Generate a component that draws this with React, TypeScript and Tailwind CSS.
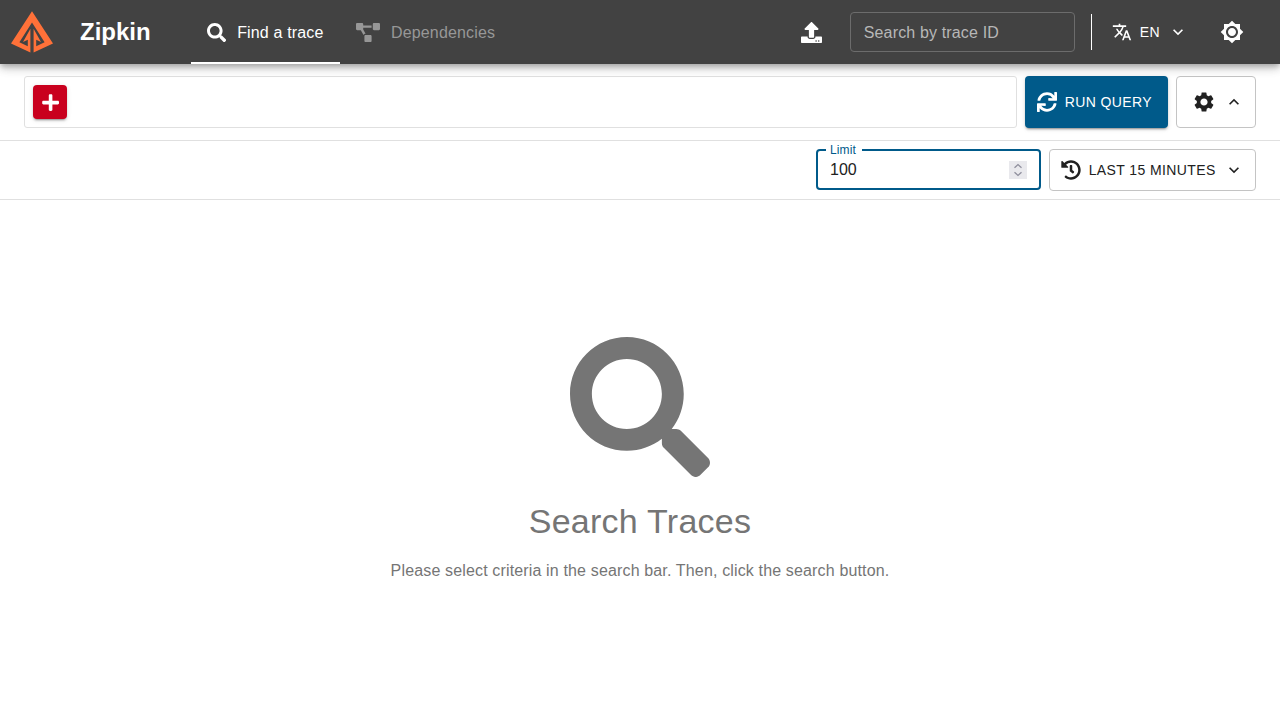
import { FaSearch, FaProjectDiagram, FaUpload, FaPlus, FaSync, FaHistory } from "react-icons/fa";
import { MdTranslate, MdSettings, MdKeyboardArrowDown, MdKeyboardArrowUp, MdBrightness7 } from "react-icons/md";

function Logo() {
  return (
    <svg width="42" height="42" viewBox="0 0 42 42" fill="#ff7139">
      <path d="M21 0.3L42 32.6L22.6 41.6V17.8L30 31L25.2 28.8V35.2L33.6 31.3L21 11.4L8.4 31.3L16.8 35.2V28.8L12 31L19.4 17.8V41.6L0 32.6Z" />
    </svg>
  );
}

function Header() {
  return (
    <header className="relative z-10 flex h-16 items-center bg-[#424242] text-white shadow-[0px_3px_5px_-1px_rgba(0,0,0,0.2),0px_5px_8px_0px_rgba(0,0,0,0.14),0px_1px_14px_0px_rgba(0,0,0,0.12)]">
      <div className="flex w-16 justify-center">
        <Logo />
      </div>
      <h1 className="ml-4 w-[111px] text-2xl font-bold">Zipkin</h1>
      <nav className="flex h-16 tracking-[0.15px]">
        <a className="flex w-[149px] items-center border-b-2 border-white pt-[3px] pl-4">
          <FaSearch size={19.2} />
          <span className="ml-[11px] pt-px">Find a trace</span>
        </a>
        <a className="flex items-center pt-px pl-4 text-[#979797]">
          <FaProjectDiagram className="h-[19.2px] w-6" />
          <span className="ml-[11px] pt-px">Dependencies</span>
        </a>
      </nav>
      <div className="ml-auto flex items-center pr-6">
        <FaUpload size={21} />
        <input
          placeholder="Search by trace ID"
          className="ml-7 h-10 w-[225px] rounded border border-[#6c6c6c] px-[13px] pt-0.5 tracking-[0.15px] outline-none placeholder:text-[#b7b7b7]"
        />
        <div className="ml-4 h-9 w-px bg-white" />
        <button className="ml-5 flex items-center text-sm tracking-[0.4px]">
          <MdTranslate size={20} />
          <span className="ml-2">EN</span>
          <MdKeyboardArrowDown size={20} className="ml-2" />
        </button>
        <button className="ml-8 p-0 pr-3">
          <MdBrightness7 size={24} />
        </button>
      </div>
    </header>
  );
}

function LimitField() {
  return (
    <div className="relative mb-px flex h-[41px] w-[225px] items-center rounded border-2 border-[#005a8a] pr-3 pl-3">
      <span className="absolute -top-2 left-2 bg-white px-1 pr-1.5 text-xs leading-[14px] tracking-[0.11px] text-[#005a8a]">Limit</span>
      <span className="flex-1">100</span>
      <span className="mt-px flex h-[18px] w-[18px] items-center justify-center bg-[#e9e9ed]">
        <svg width="18" height="18" viewBox="0 0 18 18" fill="none" stroke="#8f8f9d" strokeWidth="1.3">
          <path d="M5.5 6.8L9 3.6L12.5 6.8M5.5 11.2L9 14.4L12.5 11.2" />
        </svg>
      </span>
    </div>
  );
}

export default function App() {
  return (
    <div className="flex h-screen flex-col overflow-hidden bg-white font-['Liberation_Sans',Arial,sans-serif] text-base text-[#212121]">
      <Header />
      <section className="flex h-[77px] items-center border-b border-[#e0e0e0] px-6">
        <div className="flex h-[52px] flex-1 items-center rounded-[3px] border border-[#e0e0e0] pl-2">
          <button className="flex h-[34px] w-[34px] items-center justify-center rounded bg-[#c9001e] pt-px pl-px text-white shadow-[0px_3px_1px_-2px_rgba(0,0,0,0.2),0px_2px_2px_0px_rgba(0,0,0,0.14),0px_1px_5px_0px_rgba(0,0,0,0.12)]">
            <FaPlus size={19.2} />
          </button>
        </div>
        <button className="ml-2 flex h-[52px] w-[143px] items-center rounded bg-[#005a8a] pl-3 text-sm tracking-[0.4px] text-white shadow-[0px_3px_1px_-2px_rgba(0,0,0,0.2),0px_2px_2px_0px_rgba(0,0,0,0.14),0px_1px_5px_0px_rgba(0,0,0,0.12)]">
          <FaSync size={20} />
          <span className="ml-[7.7px]">RUN QUERY</span>
        </button>
        <button className="ml-2 flex h-[52px] w-20 items-center rounded border border-[#c4c4c4] pl-[15px]">
          <MdSettings size={24} />
          <MdKeyboardArrowUp size={20} className="ml-2" />
        </button>
      </section>
      <section className="flex h-[59px] items-center justify-end border-b border-[#e0e0e0] px-6">
        <LimitField />
        <button className="ml-2 flex h-[42px] w-[207px] items-center rounded border border-[#c4c4c4] pl-[11px] text-sm tracking-[0.4px]">
          <FaHistory size={20} />
          <span className="ml-[7.7px]">LAST 15 MINUTES</span>
          <MdKeyboardArrowDown size={20} className="ml-2" />
        </button>
      </section>
      <main className="flex flex-1 flex-col items-center pt-[137px] text-[#757575]">
        <FaSearch size={140} />
        <h2 className="mt-[23px] text-[34px] leading-[42px] tracking-[0.25px]">Search Traces</h2>
        <p className="mt-[17px] leading-6 tracking-[0.15px]">Please select criteria in the search bar. Then, click the search button.</p>
      </main>
    </div>
  );
}
